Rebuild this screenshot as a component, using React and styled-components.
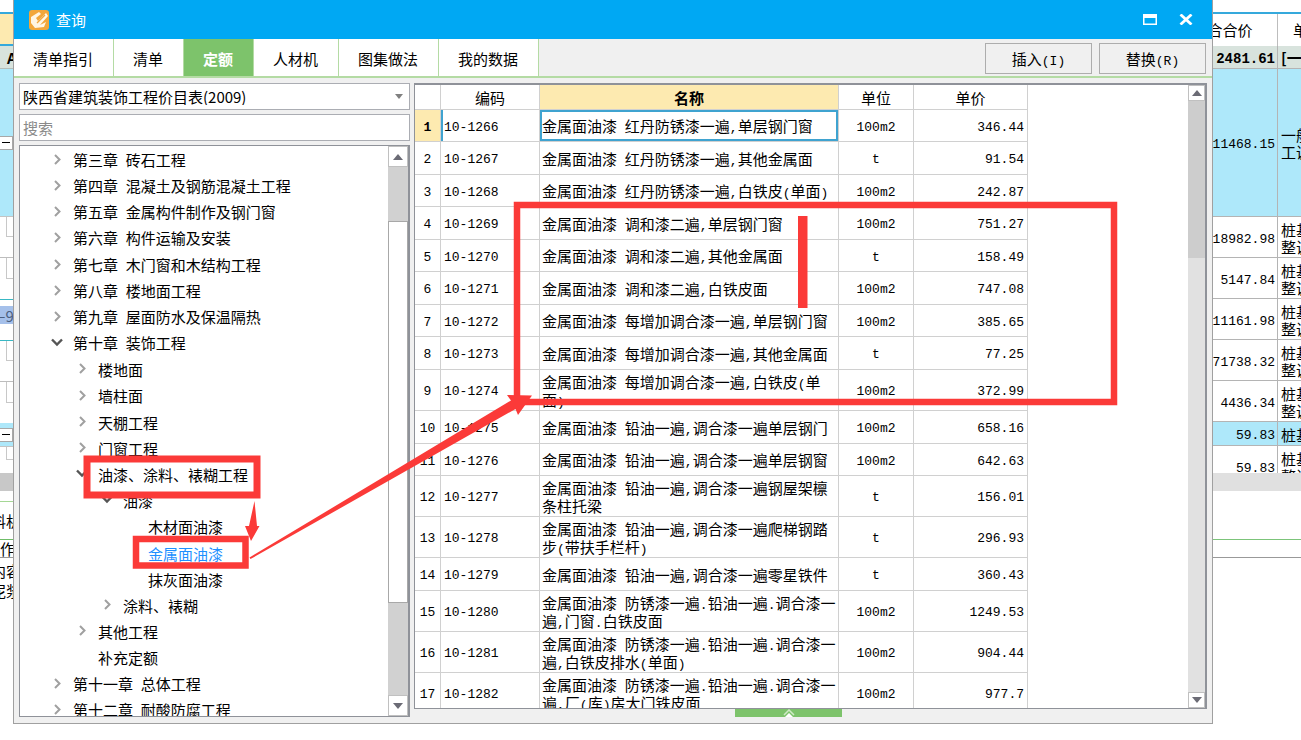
import React, { useState } from "react";
import styled, { createGlobalStyle } from "styled-components";

const tabs = ["清单指引", "清单", "定额", "人材机", "图集做法", "我的数据"];

const tree = [
  { text: "第三章 砖石工程", level: 0, icon: "closed" },
  { text: "第四章 混凝土及钢筋混凝土工程", level: 0, icon: "closed" },
  { text: "第五章 金属构件制作及钢门窗", level: 0, icon: "closed" },
  { text: "第六章 构件运输及安装", level: 0, icon: "closed" },
  { text: "第七章 木门窗和木结构工程", level: 0, icon: "closed" },
  { text: "第八章 楼地面工程", level: 0, icon: "closed" },
  { text: "第九章 屋面防水及保温隔热", level: 0, icon: "closed" },
  { text: "第十章 装饰工程", level: 0, icon: "open" },
  { text: "楼地面", level: 1, icon: "closed" },
  { text: "墙柱面", level: 1, icon: "closed" },
  { text: "天棚工程", level: 1, icon: "closed" },
  { text: "门窗工程", level: 1, icon: "closed" },
  { text: "油漆、涂料、裱糊工程", level: 1, icon: "open" },
  { text: "油漆", level: 2, icon: "open" },
  { text: "木材面油漆", level: 3 },
  { text: "金属面油漆", level: 3 },
  { text: "抹灰面油漆", level: 3 },
  { text: "涂料、裱糊", level: 2, icon: "closed" },
  { text: "其他工程", level: 1, icon: "closed" },
  { text: "补充定额", level: 1 },
  { text: "第十一章 总体工程", level: 0, icon: "closed" },
  { text: "第十二章 耐酸防腐工程", level: 0, icon: "closed" },
];

const quotas = [
  ["10-1266", "金属面油漆 红丹防锈漆一遍,单层钢门窗", "100m2", "346.44"],
  ["10-1267", "金属面油漆 红丹防锈漆一遍,其他金属面", "t", "91.54"],
  ["10-1268", "金属面油漆 红丹防锈漆一遍,白铁皮(单面)", "100m2", "242.87"],
  ["10-1269", "金属面油漆 调和漆二遍,单层钢门窗", "100m2", "751.27"],
  ["10-1270", "金属面油漆 调和漆二遍,其他金属面", "t", "158.49"],
  ["10-1271", "金属面油漆 调和漆二遍,白铁皮面", "100m2", "747.08"],
  ["10-1272", "金属面油漆 每增加调合漆一遍,单层钢门窗", "100m2", "385.65"],
  ["10-1273", "金属面油漆 每增加调合漆一遍,其他金属面", "t", "77.25"],
  ["10-1274", "金属面油漆 每增加调合漆一遍,白铁皮(单面)", "100m2", "372.99"],
  ["10-1275", "金属面油漆 铅油一遍,调合漆一遍单层钢门", "100m2", "658.16"],
  ["10-1276", "金属面油漆 铅油一遍,调合漆一遍单层钢窗", "100m2", "642.63"],
  ["10-1277", "金属面油漆 铅油一遍,调合漆一遍钢屋架檩条柱托梁", "t", "156.01"],
  ["10-1278", "金属面油漆 铅油一遍,调合漆一遍爬梯钢踏步(带扶手栏杆)", "t", "296.93"],
  ["10-1279", "金属面油漆 铅油一遍,调合漆一遍零星铁件", "t", "360.43"],
  ["10-1280", "金属面油漆 防锈漆一遍.铅油一遍.调合漆一遍,门窗.白铁皮面", "100m2", "1249.53"],
  ["10-1281", "金属面油漆 防锈漆一遍.铅油一遍.调合漆一遍,白铁皮排水(单面)", "100m2", "904.44"],
  ["10-1282", "金属面油漆 防锈漆一遍.铅油一遍.调合漆一遍,厂(库)房大门铁皮面", "100m2", "977.7"],
];

const budget = [
  { price: "2481.61", lines: ["[一"], height: 23, bg: "#d8e3dd", bold: true },
  { price: "11468.15", lines: ["一般", "工调"], height: 148, bg: "#aee8fa" },
  { price: "18982.98", lines: ["桩基", "整调"], height: 41 },
  { price: "5147.84", lines: ["桩基", "整调"], height: 41 },
  { price: "11161.98", lines: ["桩基", "整调"], height: 41 },
  { price: "71738.32", lines: ["桩基", "整调"], height: 41 },
  { price: "4436.34", lines: ["桩基", "整调"], height: 41 },
  { price: "59.83", lines: ["桩基"], height: 24, bg: "#aee8fa" },
  { price: "59.83", lines: ["桩基", "整调"], height: 41 },
];

const leftEdge = [
  { height: 14, line: "#35a9dc", thick: 2 },
  { height: 32, bg: "#fdeab0", line: "#35a9dc", thick: 2 },
  { height: 23, bg: "#d8e3dd", line: "#b5bdb9", text: "A", indent: 7, bold: true },
  { height: 148, bg: "#aee8fa", line: "#c4c4c4", box: true },
  { height: 41, line: "#bdbdbd", guide: true },
  { height: 42, line: "#38b8c4", guide: true },
  { height: 6 },
  { height: 18, bg: "#a5c0ea", text: "—9", indent: -8, color: "#4b5f80" },
  { height: 17, line: "#38b8c4" },
  { height: 41, line: "#bdbdbd", guide: true },
  { height: 41, guide: true },
  { height: 24, bg: "#aee8fa", line: "#c4c4c4", box: true },
  { height: 26, guide: true },
  { height: 18, bg: "#c8c8c8" },
  { height: 11, line: "#a5d795" },
  { height: 38, line: "#6fbd68", text: "料机", indent: -9 },
  { height: 18, line: "#999999", text: "作", indent: 0 },
  { height: 24, text: "内容", indent: -9 },
  { height: 17, text: "泥浆", indent: -9 },
];

// latin runs are set in half-width glyphs, everything else stays full width
function Mixed({ children }) {
  return children
    .split(/([\x20-\x7e]+)/)
    .map((part, i) => (i % 2 ? <Half key={i}>{part}</Half> : part));
}

function Chevron({ type }) {
  if (!type) return <ChevronBox as="span" />;
  const open = type === "open";
  return (
    <ChevronBox viewBox="0 0 14 14">
      <path
        d={open ? "M2 3.5 L7 8.5 L12 3.5" : "M5 2 L9.5 6.5 L5 11"}
        fill="none"
        stroke={open ? "#555" : "#a0a0a0"}
        strokeWidth={open ? 2.4 : 2}
      />
    </ChevronBox>
  );
}

function Triangle({ down }) {
  return (
    <svg width="10" height="6" viewBox="0 0 10 6">
      <path d={down ? "M0 0 H10 L5 6 Z" : "M0 6 H10 L5 0 Z"} fill="#6b6b75" />
    </svg>
  );
}

function Annotations() {
  return (
    <Marks width="1301" height="740" viewBox="0 0 1301 740">
      <g fill="none" stroke="#fb3a38">
        <rect x="87" y="459" width="170" height="36" strokeWidth="7" />
        <rect x="136" y="539" width="109.5" height="26.5" strokeWidth="6.5" />
        <rect x="517" y="205" width="597" height="197" strokeWidth="6.5" />
      </g>
      <g fill="#fb3a38">
        <rect x="798" y="216" width="9.5" height="92" />
        <path d="M254.5 501 L257 526 L259.5 526 L251 541 L245 526 L249 526 Z" />
        <path d="M249.5 557.5 L511 400.5 L507 395 L532 395.5 L518 415 L515.5 409 L250.5 559 Z" />
      </g>
    </Marks>
  );
}

function App() {
  const [tab, setTab] = useState("定额");
  const [node, setNode] = useState("金属面油漆");
  const [row, setRow] = useState(0);

  return (
    <Desktop>
      <GlobalStyle />
      <LeftEdge>
        {leftEdge.map((item, i) => (
          <EdgeRow
            key={i}
            $height={item.height}
            $bg={item.bg}
            $line={item.line}
            $thick={item.thick}
            $indent={item.indent}
            $bold={item.bold}
            $color={item.color}
          >
            {item.guide && <Guide />}
            {item.box && <MinusBox />}
            {item.text}
          </EdgeRow>
        ))}
      </LeftEdge>

      <Dialog>
        <TitleBar>
          <Logo viewBox="0 0 20 20">
            <rect width="20" height="20" rx="3" fill="#f2a73b" />
            <path
              d="M2 7 L10 2 L12 4 L7 8 L9 11 L17 3 L19 6 L11 15 L17 12 L15 17 L6 18 L2 13 Z"
              fill="#fff6e4"
            />
            <path d="M8 13 L16 5" stroke="#f2a73b" strokeWidth="1.2" />
          </Logo>
          <Title>查询</Title>
          <WindowButton aria-label="最大化">
            <svg width="14" height="11" viewBox="0 0 14 11">
              <path
                d="M0 0 H14 V11 H0 Z M1.5 4 V9.5 H12.5 V4 Z"
                fill="#fff"
                fillRule="evenodd"
              />
            </svg>
          </WindowButton>
          <WindowButton aria-label="关闭">
            <svg width="14" height="11" viewBox="0 0 14 11">
              <path
                d="M1.5 0.5 L12.5 10.5 M12.5 0.5 L1.5 10.5"
                stroke="#fff"
                strokeWidth="2.8"
              />
            </svg>
          </WindowButton>
        </TitleBar>

        <TabBar>
          {tabs.map((name) => (
            <Tab key={name} $active={name === tab} onClick={() => setTab(name)}>
              {name}
            </Tab>
          ))}
          <Actions>
            <ActionButton>
              <Mixed>插入(I)</Mixed>
            </ActionButton>
            <ActionButton>
              <Mixed>替换(R)</Mixed>
            </ActionButton>
          </Actions>
        </TabBar>

        <Body>
          <SidePanel>
            <SelectWrap>
              <Select aria-label="定额库">
                <option>陕西省建筑装饰工程价目表(2009)</option>
              </Select>
              <svg width="8" height="5" viewBox="0 0 8 5">
                <path d="M0 0 H8 L4 5 Z" fill="#808080" />
              </svg>
            </SelectWrap>
            <Search type="text" placeholder="搜索" aria-label="搜索" />
            <TreePanel>
              <Tree>
                {tree.map((item) => (
                  <TreeRow key={item.text} $level={item.level}>
                    <Chevron type={item.icon} />
                    <NodeButton
                      $active={item.text === node}
                      onClick={() => setNode(item.text)}
                    >
                      <Mixed>{item.text}</Mixed>
                    </NodeButton>
                  </TreeRow>
                ))}
              </Tree>
              <TreeScroll>
                <ScrollButton aria-label="向上" $size={21}>
                  <Triangle />
                </ScrollButton>
                <Space $grow={54} />
                <TreeThumb />
                <Space $grow={92} />
                <ScrollButton aria-label="向下" $size={21}>
                  <Triangle down />
                </ScrollButton>
              </TreeScroll>
            </TreePanel>
          </SidePanel>

          <MainPanel>
            <GridPanel>
              <GridArea>
                <Grid>
                  <colgroup>
                    <Col $w={26} />
                    <Col $w={99} />
                    <Col $w={299} />
                    <Col $w={75} />
                    <Col $w={114} />
                  </colgroup>
                  <thead>
                    <tr>
                      <Th />
                      <Th>编码</Th>
                      <Th $active>名称</Th>
                      <Th>单位</Th>
                      <Th>单价</Th>
                    </tr>
                  </thead>
                  <tbody>
                    {quotas.map(([code, name, unit, price], i) => (
                      <Row key={code} onClick={() => setRow(i)}>
                        <NumberCell $active={i === row}>{i + 1}</NumberCell>
                        <CodeCell $active={i === row}>{code}</CodeCell>
                        <NameCell $active={i === row}>
                          <Mixed>{name}</Mixed>
                        </NameCell>
                        <UnitCell>{unit}</UnitCell>
                        <PriceCell>{price}</PriceCell>
                      </Row>
                    ))}
                  </tbody>
                </Grid>
              </GridArea>
              <GridScroll>
                <ScrollButton aria-label="向上" $size={16}>
                  <Triangle />
                </ScrollButton>
                <GridThumb />
                <Space $grow={434} $light />
                <ScrollButton aria-label="向下" $size={16}>
                  <Triangle down />
                </ScrollButton>
              </GridScroll>
            </GridPanel>
            <Expander aria-label="展开">
              <svg width="14" height="8" viewBox="0 0 14 8">
                <path d="M2 6 L7 1 L12 6" fill="none" stroke="#cfeac6" strokeWidth="1.5" />
                <path d="M3 8 L7 4 L11 8 Z" fill="#fff" />
              </svg>
            </Expander>
          </MainPanel>
        </Body>
      </Dialog>

      <RightEdge>
        <BudgetView>
          <Budget>
            <colgroup>
              <Col $w={95} />
              <Col $w={46} />
            </colgroup>
            <thead>
              <tr>
                <BudgetHead>合合价</BudgetHead>
                <BudgetHead>单</BudgetHead>
              </tr>
            </thead>
            <tbody>
              {budget.map((item, i) => (
                <BudgetRow key={i} $height={item.height} $bg={item.bg} $bold={item.bold}>
                  <BudgetPrice $bold={item.bold}>{item.price}</BudgetPrice>
                  <BudgetText>
                    {item.lines.map((line, n) => (
                      <div key={n}>{line}</div>
                    ))}
                  </BudgetText>
                </BudgetRow>
              ))}
            </tbody>
          </Budget>
        </BudgetView>
        <EdgeRow $height={18} $bg="#e0e0e0" />
        <EdgeRow $height={49} $line="#7cc47a" />
        <EdgeRow $height={18} $line="#999999" />
      </RightEdge>

      <Annotations />
    </Desktop>
  );
}

export default App;

const GlobalStyle = createGlobalStyle`
  * {
    box-sizing: border-box;
  }

  body {
    margin: 0;
    background: #fff;
    color: #000;
    font-family: "Noto Sans CJK SC", sans-serif;
    font-size: 15px;
    line-height: 17px;
  }

  button,
  input,
  select {
    font: inherit;
    color: inherit;
    margin: 0;
    padding: 0;
    border: 0;
    border-radius: 0;
    background: none;
  }

  svg {
    display: block;
    flex: none;
  }
`;

const Desktop = styled.div`
  position: relative;
  display: flex;
  align-items: flex-start;
  height: 100vh;
  overflow: hidden;
`;

const Half = styled.span`
  font-family: "Liberation Mono", monospace;
  font-size: 13px;
  line-height: 13px;
  white-space: pre-wrap;
`;

const LeftEdge = styled.div`
  flex: none;
  width: 13px;
  overflow: hidden;
`;

const EdgeRow = styled.div`
  display: flex;
  align-items: center;
  height: ${(props) => props.$height}px;
  background: ${(props) => props.$bg || "#fff"};
  color: ${(props) => props.$color || "#000"};
  font-weight: ${(props) => (props.$bold ? 700 : 400)};
  border-bottom: ${(props) =>
    props.$line ? `${props.$thick || 1}px solid ${props.$line}` : "0"};
  text-indent: ${(props) => props.$indent || 0}px;
  white-space: nowrap;
`;

const Guide = styled.span`
  align-self: flex-start;
  width: 7px;
  height: 50%;
  margin-left: auto;
  border-left: 1px solid #c8c8c8;
  border-bottom: 1px solid #c8c8c8;
`;

const MinusBox = styled.span`
  display: flex;
  align-items: center;
  width: 13px;
  height: 14px;
  padding: 0 2px;
  border: 1px solid #a8a8a8;
  border-left: 0;
  background: #fff;

  &::before {
    content: "";
    width: 9px;
    height: 1px;
    background: #000;
  }
`;

const Dialog = styled.main`
  display: flex;
  flex-direction: column;
  flex: 1;
  min-width: 0;
  height: calc(100vh - 16px);
  background: #f0f0f0;
  border: 1px solid #a0a0a0;
  border-top: 0;
`;

const TitleBar = styled.header`
  display: flex;
  align-items: center;
  flex: none;
  height: 39px;
  padding: 0 19px 0 15px;
  background: #00a8f3;
  color: #fff;
`;

const Logo = styled.svg`
  width: 20px;
  height: 20px;
`;

const Title = styled.span`
  flex: 1;
  padding-left: 7px;
`;

const WindowButton = styled.button`
  margin-left: 22px;
`;

const TabBar = styled.nav`
  display: flex;
  flex: none;
  height: 39px;
  border-bottom: 2px solid #b4dba4;
`;

const Tab = styled.button`
  padding: 2px 20px 0 19px;
  background: ${(props) => (props.$active ? "#7dc36b" : "#fff")};
  color: ${(props) => (props.$active ? "#fff" : "#000")};
  font-weight: ${(props) => (props.$active ? 700 : 400)};
  border-right: 1px solid #b4dba4;
`;

const Actions = styled.div`
  display: flex;
  align-items: center;
  gap: 7px;
  margin-left: auto;
  padding: 2px 6px 0 0;
`;

const ActionButton = styled.button`
  width: 107px;
  height: 31px;
  border: 1px solid #adadad;
`;

const Body = styled.div`
  display: flex;
  flex: 1;
  gap: 4px;
  min-height: 0;
  padding: 5px 5px 6px;
`;

const SidePanel = styled.aside`
  display: flex;
  flex-direction: column;
  flex: none;
  gap: 4px;
  width: 391px;
`;

const SelectWrap = styled.div`
  display: flex;
  align-items: center;
  height: 27px;
  padding-right: 6px;
  background: #fff;
  border: 1px solid #abadb3;
`;

const Select = styled.select`
  appearance: none;
  flex: 1;
  height: 25px;
  padding-left: 3px;
  outline: 0;
`;

const Search = styled.input`
  height: 27px;
  padding: 0 3px;
  background: #fff;
  border: 1px solid #abadb3;

  &::placeholder {
    color: #8a8a8a;
    opacity: 1;
  }
`;

const TreePanel = styled.div`
  display: flex;
  flex: 1;
  min-height: 0;
  background: #fff;
  border: 1px solid #8f9299;
  overflow: hidden;
`;

const Tree = styled.ul`
  flex: 1;
  margin: 0;
  padding: 1px 0 0;
  list-style: none;
`;

const TreeRow = styled.li`
  display: flex;
  align-items: center;
  height: 26px;
  padding-left: ${(props) => 30 + props.$level * 25}px;

  &:nth-child(5n) {
    height: 27px;
  }
`;

const ChevronBox = styled.svg`
  width: 14px;
  height: 14px;
  margin-right: 9px;
`;

const NodeButton = styled.button`
  color: ${(props) => (props.$active ? "#1e90ff" : "#000")};
  white-space: nowrap;
`;

const TreeScroll = styled.div`
  display: flex;
  flex-direction: column;
  flex: none;
  width: 21px;
  border-right: 1px solid #8f9299;
`;

const ScrollButton = styled.button`
  display: flex;
  align-items: center;
  justify-content: center;
  flex: none;
  height: ${(props) => props.$size}px;
  background: #fff;
  border: 1px solid #c0c0c0;
`;

const Space = styled.div`
  flex: ${(props) => props.$grow};
  background: ${(props) => (props.$light ? "#e1e1e1" : "#d1d1d1")};
`;

const TreeThumb = styled.div`
  flex: 382;
  background: #fff;
  border: 1px solid #a8a8a8;
`;

const MainPanel = styled.section`
  display: flex;
  flex-direction: column;
  align-items: center;
  flex: 1;
  min-width: 0;
`;

const GridPanel = styled.div`
  display: flex;
  flex: 1;
  align-self: stretch;
  min-height: 0;
  background: #fff;
  border: solid #8f9299;
  border-width: 2px 2px 1px 1px;
`;

const GridArea = styled.div`
  flex: 1;
  min-width: 0;
  overflow: hidden;
`;

const Grid = styled.table`
  width: 613px;
  table-layout: fixed;
  border-collapse: separate;
  border-spacing: 0;
`;

const Col = styled.col`
  width: ${(props) => props.$w}px;
`;

const Th = styled.th`
  height: 25px;
  padding: 0;
  font-weight: ${(props) => (props.$active ? 700 : 400)};
  background: ${(props) => (props.$active ? "#fdeab0" : "#fff")};
  border-right: 1px solid #d0d0d0;
  border-bottom: 1px solid #d0d0d0;
`;

const Row = styled.tr`
  height: 32px;

  &:nth-child(even) {
    height: 33px;
  }

  &:nth-child(9),
  &:nth-child(12),
  &:nth-child(13),
  &:nth-child(n + 15) {
    height: 41px;
  }
`;

const Cell = styled.td`
  padding: 3px 3px 0;
  border-right: 1px solid #d0d0d0;
  border-bottom: 1px solid #d0d0d0;
  font-family: "Liberation Mono", monospace;
  font-size: 13px;
  overflow: hidden;
`;

const NumberCell = styled(Cell)`
  padding: 3px 0 0;
  text-align: center;
  font-weight: ${(props) => (props.$active ? 700 : 400)};
  background: ${(props) => (props.$active ? "#fdeab0" : "#fff")};
`;

const CodeCell = styled(Cell)`
  box-shadow: ${(props) => (props.$active ? "inset 2px 0 #3fa3d0" : "none")};
`;

const NameCell = styled(Cell)`
  padding: 1px 1px 0 2px;
  font-family: "Noto Sans CJK SC", sans-serif;
  font-size: 15px;
  box-shadow: ${(props) => (props.$active ? "inset 0 0 0 2px #3fa3d0" : "none")};
`;

const UnitCell = styled(Cell)`
  text-align: center;
`;

const PriceCell = styled(Cell)`
  text-align: right;
`;

const GridScroll = styled.div`
  display: flex;
  flex-direction: column;
  flex: none;
  width: 17px;
`;

const GridThumb = styled.div`
  flex: 157;
  background: #cdcdcd;
`;

const Expander = styled.button`
  display: flex;
  justify-content: center;
  flex: none;
  width: 107px;
  height: 8px;
  margin-right: 44px;
  background: #7dc36b;
`;

const RightEdge = styled.div`
  flex: none;
  width: 88px;
  overflow: hidden;
`;

const BudgetView = styled.div`
  height: 473px;
  padding-top: 12px;
  overflow: hidden;
`;

const Budget = styled.table`
  width: 141px;
  margin-left: -30px;
  table-layout: fixed;
  border-collapse: separate;
  border-spacing: 0;
  border-top: 2px solid #35a9dc;
`;

const BudgetHead = styled.th`
  height: 32px;
  padding: 0 0 2px;
  font-weight: 400;
  border-right: 1px solid #bdbdbd;
`;

const BudgetRow = styled.tr`
  height: ${(props) => props.$height}px;
  background: ${(props) => props.$bg || "#fff"};
  font-weight: ${(props) => (props.$bold ? 700 : 400)};

  td {
    border-right: 1px solid #b4b4b4;
    border-bottom: 1px solid #b4b4b4;
  }
`;

const BudgetPrice = styled.td`
  padding: 4px 2px 0;
  text-align: right;
  font-family: "Liberation Mono", monospace;
  font-size: ${(props) => (props.$bold ? 14 : 13)}px;
`;

const BudgetText = styled.td`
  padding: 1px 3px 0;
  white-space: nowrap;
`;

const Marks = styled.svg`
  position: absolute;
  top: 0;
  left: 0;
  pointer-events: none;
`;
